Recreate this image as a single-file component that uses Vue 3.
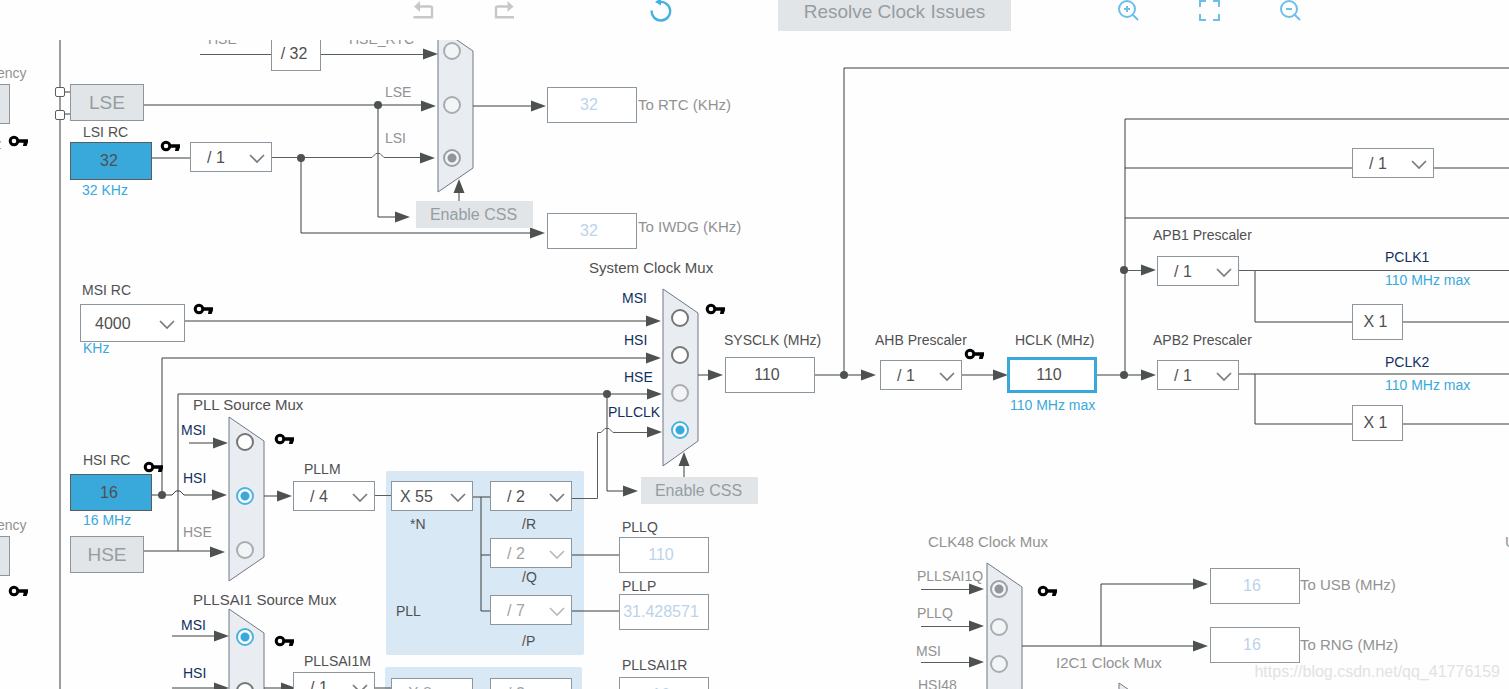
<script setup>
import { ref } from 'vue'

// Distance the diagram is scrolled under the toolbar.
const scrollTop = 40

const place = (n) => ({
  left: n.x + 'px',
  top: n.y - scrollTop + 'px',
  width: n.w ? n.w + 'px' : undefined,
  height: n.h ? n.h + 'px' : undefined
})

const panels = [
  { x: 386, y: 471, w: 198, h: 184 },
  { x: 385, y: 667, w: 197, h: 184 }
]

const muxes = [
  '438,27 473,51 473,168 438,192',
  '663,289 698,313 698,441 663,466',
  '229,417 264,441 264,557 229,581',
  '229,609 264,633 264,750 229,774',
  '987,563 1022,587 1022,740 987,764',
  '1119,683 1154,707 1154,820 1119,844'
]

const wires = [
  'M60 40V900', 'M60 92H70', 'M60 114H70',
  'M144 105H425', 'M378 105V217H400',
  'M152 158H190', 'M301 158V233H535', 'M473 106H535', 'M459 201V190',
  'M185 321H650', 'M162 495V358H650', 'M178 551V394H650', 'M607 394V491H625',
  'M698 375H712', 'M815 375H865', 'M844 375V68H4000', 'M962 375H997',
  'M1097 375H1146', 'M1125 375V119H4000', 'M1125 168H1352', 'M1434 168H4000',
  'M1125 218H4000', 'M1255 270V322H1352', 'M1403 322H4000',
  'M1239 374H4000', 'M1255 374V424H1352', 'M1403 424H4000',
  'M684 477V463', 'M152 495H172L176 491H180L184 495H215', 'M144 551H214',
  'M189 443H216', 'M264 496H281', 'M473 497H490', 'M481 497V611H490',
  'M481 555H490', 'M572 555H619', 'M572 611H619',
  'M172 636H216', 'M172 688H216', 'M264 688H283', 'M375 688H391', 'M473 693H490',
  'M1022 646H1198', 'M1101 646V584H1198'
]

const darkWires = [
  'M200 54.5H271', 'M321 54.5H425', 'M272 157.5H372L376 153.5H380L384 157.5H425',
  'M1125 270.5H1145', 'M1239 270.5H4000', 'M375 495.5H391',
  'M572 498.5H597.5V432.5H601L605 428.5H609L613 432.5H650',
  'M921 589.5H972', 'M921 626.5H972', 'M921 662.5H972'
]

// Tips of the arrow heads that point right.
const arrows = [
  [438, 54], [436, 106], [435, 158], [410, 217], [545, 233], [546, 106],
  [661, 321], [661, 358], [662, 394], [662, 432], [638, 491], [723, 375],
  [876, 375], [1008, 375], [1156, 375], [1156, 270], [228, 443], [227, 495],
  [225, 552], [292, 496], [229, 636], [229, 688], [296, 688],
  [984, 589], [984, 626], [984, 662], [1208, 584], [1208, 646]
]

const upArrows = [[459, 179], [684, 452]]

const dots = [
  [378, 105], [301, 158], [607, 394], [162, 495], [844, 375], [1124, 375], [1124, 270]
]

const keys = [
  [161, 146], [9, 141], [9, 591], [194, 309], [275, 439], [275, 641],
  [144, 467], [706, 309], [965, 354], [1038, 591]
]

const labels = [
  { t: 'HSE', x: 208, y: 39, c: 'muted' },
  { t: 'HSE_RTC', x: 349, y: 39, c: 'muted' },
  { t: 'ency', x: -3, y: 73, c: 'muted' },
  { t: 'KHz', x: -25, y: 144, c: 'muted' },
  { t: 'ency', x: -3, y: 525, c: 'muted' },
  { t: 'LSE', x: 385, y: 92, c: 'muted' },
  { t: 'LSI', x: 385, y: 138, c: 'muted' },
  { t: 'LSI RC', x: 83, y: 132 },
  { t: '32 KHz', x: 82, y: 190, c: 'blue' },
  { t: 'To RTC (KHz)', x: 638, y: 105, c: 'muted', big: true },
  { t: 'To IWDG (KHz)', x: 638, y: 227, c: 'muted', big: true },
  { t: 'System Clock Mux', x: 589, y: 268, big: true },
  { t: 'MSI', x: 622, y: 298, c: 'navy' },
  { t: 'HSI', x: 624, y: 340, c: 'navy' },
  { t: 'HSE', x: 624, y: 377, c: 'navy' },
  { t: 'PLLCLK', x: 608, y: 412, c: 'navy' },
  { t: 'MSI RC', x: 82, y: 290 },
  { t: 'KHz', x: 83, y: 348, c: 'blue' },
  { t: 'PLL Source Mux', x: 193, y: 405, big: true },
  { t: 'MSI', x: 181, y: 430, c: 'navy' },
  { t: 'HSI', x: 183, y: 478, c: 'navy' },
  { t: 'HSE', x: 183, y: 532, c: 'muted' },
  { t: 'HSI RC', x: 83, y: 460 },
  { t: '16 MHz', x: 83, y: 520, c: 'blue' },
  { t: 'PLLM', x: 304, y: 469 },
  { t: '*N', x: 410, y: 524 },
  { t: '/R', x: 522, y: 524 },
  { t: '/Q', x: 522, y: 577 },
  { t: '/P', x: 522, y: 641 },
  { t: 'PLL', x: 396, y: 611 },
  { t: 'PLLQ', x: 622, y: 527 },
  { t: 'PLLP', x: 622, y: 586 },
  { t: 'PLLSAI1R', x: 622, y: 665 },
  { t: 'PLLSAI1 Source Mux', x: 193, y: 600, big: true },
  { t: 'MSI', x: 181, y: 625, c: 'navy' },
  { t: 'HSI', x: 183, y: 673, c: 'navy' },
  { t: 'PLLSAI1M', x: 304, y: 661 },
  { t: 'SYSCLK (MHz)', x: 724, y: 340 },
  { t: 'AHB Prescaler', x: 875, y: 340 },
  { t: 'HCLK (MHz)', x: 1015, y: 340 },
  { t: '110 MHz max', x: 1010, y: 405, c: 'blue' },
  { t: 'APB1 Prescaler', x: 1153, y: 235 },
  { t: 'APB2 Prescaler', x: 1153, y: 340 },
  { t: 'PCLK1', x: 1385, y: 257, c: 'navy' },
  { t: '110 MHz max', x: 1385, y: 280, c: 'blue' },
  { t: 'PCLK2', x: 1385, y: 362, c: 'navy' },
  { t: '110 MHz max', x: 1385, y: 385, c: 'blue' },
  { t: 'CLK48 Clock Mux', x: 928, y: 542, c: 'muted', big: true },
  { t: 'USART1 Clock Mux', x: 1505, y: 542, c: 'muted', big: true },
  { t: 'PLLSAI1Q', x: 917, y: 576, c: 'muted' },
  { t: 'PLLQ', x: 917, y: 613, c: 'muted' },
  { t: 'MSI', x: 916, y: 651, c: 'muted' },
  { t: 'HSI48', x: 918, y: 685, c: 'muted' },
  { t: 'I2C1 Clock Mux', x: 1056, y: 663, c: 'muted', big: true },
  { t: 'To USB (MHz)', x: 1300, y: 585, c: 'muted', big: true },
  { t: 'To RNG (MHz)', x: 1300, y: 645, c: 'muted', big: true }
]

const blocks = [
  { t: '/ 32', x: 271, y: 34, w: 50, h: 37, c: 'low' },
  { t: 'X 1', x: 1352, y: 304, w: 51, h: 36, c: 'factor' },
  { t: 'X 1', x: 1352, y: 405, w: 51, h: 36, c: 'factor' },
  { t: 'LSE', x: 70, y: 84, w: 74, h: 37, c: 'osc' },
  { t: 'HSE', x: 70, y: 536, w: 74, h: 37, c: 'osc' },
  { t: '32', x: 70, y: 142, w: 82, h: 38, c: 'rc' },
  { t: '16', x: 70, y: 474, w: 82, h: 37, c: 'rc' },
  { t: '', x: -65, y: 84, w: 75, h: 40, c: 'osc' },
  { t: '', x: -65, y: 536, w: 75, h: 40, c: 'osc' }
]

const pins = [{ x: 55, y: 87, w: 10, h: 10 }, { x: 55, y: 110, w: 10, h: 10 }]

const fields = [
  { name: 'To RTC (KHz)', v: '32', x: 547, y: 87, off: true },
  { name: 'To IWDG (KHz)', v: '32', x: 547, y: 213, off: true },
  { name: 'SYSCLK (MHz)', v: '110', x: 725, y: 357 },
  { name: 'HCLK (MHz)', v: '110', x: 1007, y: 357, hot: true },
  { name: 'PLLQ', v: '110', x: 619, y: 537, off: true },
  { name: 'PLLP', v: '31.428571', x: 619, y: 594, off: true },
  { name: 'PLLSAI1R', v: '16', x: 619, y: 677, off: true },
  { name: 'To USB (MHz)', v: '16', x: 1210, y: 568, off: true },
  { name: 'To RNG (MHz)', v: '16', x: 1210, y: 627, off: true }
].map((f) => ({ ...f, w: 90, h: 36 }))

const selects = [
  { name: 'LSI divider', v: '/ 1', x: 190, y: 142 },
  { name: 'MSI RC', v: '4000', x: 80, y: 304, w: 105, h: 38, c: 'wide' },
  { name: 'PLLM', v: '/ 4', x: 293, y: 481 },
  { name: 'PLL N', v: 'X 55', x: 391, y: 481, c: 'tight' },
  { name: 'PLL R', v: '/ 2', x: 490, y: 481 },
  { name: 'PLL Q', v: '/ 2', x: 490, y: 538, c: 'dim' },
  { name: 'PLL P', v: '/ 7', x: 490, y: 595, c: 'dim' },
  { name: 'PLLSAI1M', v: '/ 1', x: 293, y: 672 },
  { name: 'PLLSAI1 N', v: 'X 8', x: 391, y: 678, c: 'dim' },
  { name: 'PLLSAI1 R', v: '/ 2', x: 490, y: 678, c: 'dim' },
  { name: 'AHB Prescaler', v: '/ 1', x: 880, y: 360 },
  { name: 'Cortex timer prescaler', v: '/ 1', x: 1352, y: 148 },
  { name: 'APB1 Prescaler', v: '/ 1', x: 1157, y: 256 },
  { name: 'APB2 Prescaler', v: '/ 1', x: 1157, y: 360 }
].map((s) => ({ w: 82, h: 30, ...s }))

const picked = ref({ rtc: 'LSI', sys: 'PLLCLK', pll: 'HSI', sai: 'MSI', clk48: 'PLLSAI1Q' })

const radios = [
  { g: 'rtc', v: 'HSE_RTC', x: 452, y: 51, off: true },
  { g: 'rtc', v: 'LSE', x: 452, y: 105, off: true },
  { g: 'rtc', v: 'LSI', x: 452, y: 158, off: true },
  { g: 'sys', v: 'MSI', x: 680, y: 318 },
  { g: 'sys', v: 'HSI', x: 680, y: 355 },
  { g: 'sys', v: 'HSE', x: 680, y: 393, off: true },
  { g: 'sys', v: 'PLLCLK', x: 680, y: 430 },
  { g: 'pll', v: 'MSI', x: 245, y: 442 },
  { g: 'pll', v: 'HSI', x: 245, y: 496 },
  { g: 'pll', v: 'HSE', x: 245, y: 550, off: true },
  { g: 'sai', v: 'MSI', x: 245, y: 637 },
  { g: 'sai', v: 'HSI', x: 245, y: 691 },
  { g: 'clk48', v: 'PLLSAI1Q', x: 999, y: 589, off: true },
  { g: 'clk48', v: 'PLLQ', x: 999, y: 627, off: true },
  { g: 'clk48', v: 'MSI', x: 999, y: 664, off: true }
]

const cssButtons = [
  { x: 416, y: 201, w: 117, h: 27 },
  { x: 641, y: 477, w: 117, h: 27 }
]
</script>

<template>
  <div class="clock-config">
    <header class="toolbar">
      <div class="group">
        <button class="tool" aria-label="Undo">
          <svg viewBox="0 0 24 24" fill="none" stroke="#c8c8c8" stroke-width="2.4">
            <path d="M6 6.5H18.5Q20 6.5 20 8V17.3H1.5" />
            <path d="M2 6.5L8 1V12Z" fill="#c8c8c8" stroke="none" />
          </svg>
        </button>
        <button class="tool" aria-label="Redo">
          <svg viewBox="0 0 24 24" fill="none" stroke="#c8c8c8" stroke-width="2.4">
            <path d="M16 6.5H4.5Q3 6.5 3 8V17.3H21" />
            <path d="M20.5 6.5L14.5 1V12Z" fill="#c8c8c8" stroke="none" />
          </svg>
        </button>
      </div>
      <button class="tool reset" aria-label="Reset">
        <svg viewBox="0 0 24 24" fill="none" stroke="#45b0e2" stroke-width="2.4">
          <path d="M2.6 10.5A9.3 9.3 0 1 0 9.5 2.2" />
          <path d="M6 2L12 -2V5.5Z" fill="#45b0e2" stroke="none" />
        </svg>
      </button>
      <button class="resolve" disabled>Resolve Clock Issues</button>
      <div class="group">
        <button class="tool" aria-label="Zoom in">
          <svg viewBox="0 0 24 24" fill="none" stroke="#6cc0e8" stroke-width="2">
            <circle cx="11" cy="9" r="8" /><path d="M16 14L22 20M11 6V12M8 9H14" />
          </svg>
        </button>
        <button class="tool" aria-label="Fit to window">
          <svg viewBox="0 0 24 24" fill="none" stroke="#6cc0e8" stroke-width="2">
            <path d="M3 7V1H9M16 1H22V7M22 14V20H16M9 20H3V14" />
          </svg>
        </button>
        <button class="tool" aria-label="Zoom out">
          <svg viewBox="0 0 24 24" fill="none" stroke="#6cc0e8" stroke-width="2">
            <circle cx="11" cy="9" r="8" /><path d="M16 14L22 20M8 9H14" />
          </svg>
        </button>
      </div>
    </header>

    <main class="canvas">
      <div v-for="(p, i) in panels" :key="'p' + i" class="node panel" :style="place(p)"></div>

      <svg class="wires" aria-hidden="true">
        <g :transform="`translate(0 ${-scrollTop})`">
          <polygon v-for="m in muxes" :key="m" :points="m" class="mux" />
          <path v-for="w in wires" :key="w" :d="w" class="wire" />
          <path v-for="w in darkWires" :key="w" :d="w" class="wire dark" />
          <path v-for="([x, y], i) in arrows" :key="'a' + i" class="solid" :d="`M${x} ${y}l-15 -5.5v11z`" />
          <path v-for="([x, y], i) in upArrows" :key="'u' + i" class="solid" :d="`M${x} ${y}l-5.5 14h11z`" />
          <circle v-for="([x, y], i) in dots" :key="'d' + i" class="solid" :cx="x" :cy="y" r="4" />
          <g v-for="([x, y], i) in keys" :key="'k' + i" :transform="`translate(${x} ${y})`">
            <circle cx="5" cy="0" r="3.8" fill="none" stroke="#000" stroke-width="3" />
            <path d="M8.5 -1.8H19V1.2L17.6 5H14L14.6 1.8H8.5Z" />
          </g>
        </g>
      </svg>

      <div v-for="(b, i) in blocks" :key="'b' + i" class="node block" :class="b.c" :style="place(b)">{{ b.t }}</div>
      <div v-for="(p, i) in pins" :key="'n' + i" class="node pin" :style="place(p)"></div>

      <input
        v-for="f in fields"
        :key="f.name"
        class="node field"
        :class="{ off: f.off, hot: f.hot }"
        :style="place(f)"
        :value="f.v"
        :aria-label="f.name"
        readonly
      />

      <div v-for="s in selects" :key="s.name" class="node picker" :class="s.c" :style="place(s)">
        <select :aria-label="s.name"><option>{{ s.v }}</option></select>
        <svg viewBox="0 0 16 10" fill="none" stroke="currentColor" stroke-width="1.7">
          <path d="M1 1L8 8L15 1" />
        </svg>
      </div>

      <input
        v-for="r in radios"
        :key="r.g + r.v"
        v-model="picked[r.g]"
        class="node radio"
        :class="{ off: r.off }"
        type="radio"
        :name="r.g"
        :value="r.v"
        :disabled="r.off"
        :aria-label="r.v"
        :style="place({ x: r.x - 9, y: r.y - 9 })"
      />

      <button v-for="(b, i) in cssButtons" :key="'c' + i" class="node css-button" disabled :style="place(b)">
        Enable CSS
      </button>

      <span
        v-for="(l, i) in labels"
        :key="'l' + i"
        class="node label"
        :class="[l.c, { big: l.big }]"
        :style="place({ x: l.x, y: l.y - 8 })"
      >{{ l.t }}</span>

      <span class="watermark">https://blog.csdn.net/qq_41776159</span>
    </main>
  </div>
</template>

<style>
body {
  margin: 0;
  overflow: hidden;
}
</style>

<style scoped>
.clock-config {
  display: flex;
  flex-direction: column;
  height: 100vh;
  background: #fefefe;
  color: #505050;
  font-family: "Liberation Sans", Arial, sans-serif;
}

.clock-config * {
  box-sizing: border-box;
}

button,
input,
select {
  margin: 0;
  font-family: inherit;
}

.toolbar {
  display: flex;
  flex: none;
  gap: 105px;
  align-items: flex-start;
  height: 40px;
  padding-left: 412px;
}

.group {
  display: flex;
  gap: 57px;
}

.tool {
  width: 24px;
  height: 24px;
  padding: 0;
  border: 0;
  background: none;
}

.tool svg {
  display: block;
  width: 24px;
  height: 24px;
}

.reset {
  margin-left: 27px;
}

.resolve {
  width: 233px;
  height: 31px;
  padding: 0 0 8px;
  border: 0;
  background: #e1e5e8;
  color: #969da2;
  font-size: 19px;
  line-height: 23px;
  white-space: nowrap;
}

.canvas {
  position: relative;
  flex: 1;
  overflow: hidden;
}

.node {
  position: absolute;
}

.panel {
  border-radius: 2px;
  background: #d9e8f5;
}

.wires {
  position: absolute;
  inset: 0;
  width: 100%;
  height: 100%;
}

.mux {
  fill: #e9edf1;
  stroke: #6f7885;
}

.wire {
  fill: none;
  stroke: #3a3f3d;
}

.wire.dark {
  stroke: #5a5e5c;
}

.solid {
  fill: #4d5250;
}

.block {
  display: flex;
  align-items: center;
  justify-content: center;
  border: 1px solid #8c969e;
  background: #fff;
  font-size: 16px;
  white-space: nowrap;
}

.block.low {
  padding: 3px 4px 0 0;
}

.block.factor {
  padding-right: 4px;
}

.block.osc {
  background: #e1e5e8;
  color: #969da2;
  font-size: 19px;
}

.block.rc {
  padding-right: 4px;
  border-color: #555d62;
  background: #39a9dc;
}

.pin {
  border: 1px solid #5a5e5c;
  border-radius: 2px;
  background: #fff;
}

.field {
  padding: 0 6px 0 0;
  border: 1px solid #8c969e;
  border-radius: 0;
  outline: 0;
  background: #fff;
  color: #505050;
  font-size: 16px;
  text-align: center;
}

.field.off {
  color: #bcd3ea;
}

.field.hot {
  border: 3px solid #39a9dc;
}

.picker {
  background: #fff;
  color: #505050;
}

.picker select {
  width: 100%;
  height: 100%;
  padding: 0 0 0 16px;
  border: 1px solid #8c969e;
  border-radius: 0;
  appearance: none;
  background: transparent;
  color: inherit;
  font-size: 16px;
}

.picker svg {
  position: absolute;
  top: calc(50% - 3px);
  right: 7px;
  width: 16px;
  height: 10px;
  opacity: 0.75;
  pointer-events: none;
}

.picker.wide svg {
  right: 10px;
}

.picker.wide select {
  padding-left: 14px;
}

.picker.tight select {
  padding-left: 8px;
}

.picker.dim {
  color: #a0a4a8;
}

.radio {
  width: 18px;
  height: 18px;
  border: 2px solid #747677;
  border-radius: 50%;
  appearance: none;
  background: #fff;
}

.radio:checked {
  border-color: #4db2e0;
  background: radial-gradient(circle, #39a9dc 0 4px, #fff 5px);
}

.radio.off {
  border-color: #a9adb1;
  background: #f2f4f6;
}

.radio.off:checked {
  border-color: #9ba0a4;
  background: radial-gradient(circle, #8f979c 0 4px, #f2f4f6 5px);
}

.css-button {
  padding: 0 2px 0 0;
  border: 0;
  background: #e1e5e8;
  color: #969da2;
  font-size: 16px;
  white-space: nowrap;
}

.label {
  font-size: 14px;
  line-height: 16px;
  white-space: nowrap;
}

.label.big {
  font-size: 15px;
}

.label.muted {
  color: #929292;
}

.label.blue {
  color: #39a9dc;
}

.label.navy {
  color: #10305e;
}

.watermark {
  position: absolute;
  right: 9px;
  bottom: 8px;
  color: #e2e2e2;
  font-size: 16px;
  line-height: 18px;
}
</style>
